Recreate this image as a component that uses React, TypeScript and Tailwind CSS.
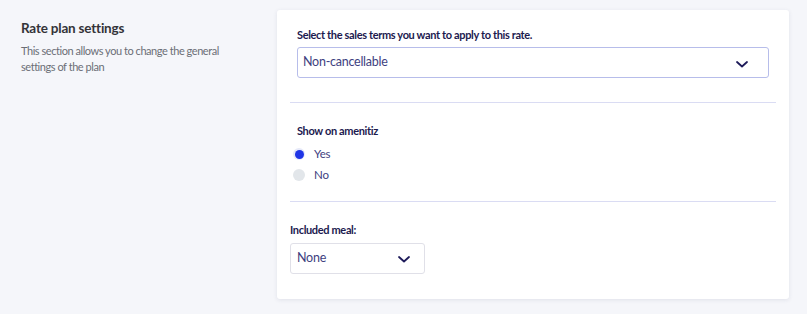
import React from "react";

const Chevron = ({ className }: { className?: string }) => (
  <svg className={className} width="12" height="7" viewBox="0 0 12 7" fill="none">
    <path d="M1 1l5 4.5L11 1" stroke="#1e1b5a" strokeWidth="1.8" strokeLinecap="round" strokeLinejoin="round" />
  </svg>
);

export default function App() {
  return (
    <div
      className="min-h-[314px] w-[807px] bg-[#f5f6fa] flex items-start"
      style={{ fontFamily: "Lato, 'Noto Sans', sans-serif" }}
    >
      <div className="w-[277px] shrink-0 pl-[21px] pt-[18px]">
        <h2 className="text-[13.5px] leading-[20px] font-bold tracking-[-0.2px] text-[#333338]">Rate plan settings</h2>
        <p className="mt-[5px] w-[206px] text-[11px] leading-[16px] tracking-[-0.45px] text-[#6b6e76]">
          This section allows you to change the general settings of the plan
        </p>
      </div>
      <div className="mt-[10px] w-[512px] h-[289px] bg-white rounded-[3px] shadow-[0_1px_4px_rgba(40,50,90,0.10)] flex flex-col">
        <div className="px-[20px] pt-[17px]">
          <label className="block text-[11px] leading-[16px] font-bold tracking-[-0.35px] text-[#1c1a4f]">
            Select the sales terms you want to apply to this rate.
          </label>
          <div className="mt-[4px] h-[31px] w-[472px] border border-[#b7bdea] rounded-[3px] flex items-center justify-between pl-[5px] pr-[20px]">
            <span className="text-[12.5px] tracking-[-0.25px] text-[#3e4180]">Non-cancellable</span>
            <Chevron className="mt-[3px]" />
          </div>
        </div>
        <div className="mx-[13px] mt-[24px] h-px bg-[#dadcf3]" />
        <div className="px-[20px] pt-[20px]">
          <div className="text-[11px] leading-[16px] font-bold tracking-[-0.35px] text-[#1c1a4f]">Show on amenitiz</div>
          <div className="mt-[5px] flex flex-col gap-[1px]">
            <div className="flex items-center h-[20px] -ml-[4px]">
              <span className="w-[12px] h-[12px] rounded-full bg-[#e6e9f9] flex items-center justify-center">
                <span className="w-[9px] h-[9px] rounded-full bg-[#1f35e6]" />
              </span>
              <span className="ml-[9px] text-[11.5px] tracking-[-0.2px] text-[#3e4180]">Yes</span>
            </div>
            <div className="flex items-center h-[20px] -ml-[4px]">
              <span className="w-[12px] h-[12px] rounded-full bg-[#e2e6ea]" />
              <span className="ml-[9px] text-[11.5px] tracking-[-0.2px] text-[#3e4180]">No</span>
            </div>
          </div>
        </div>
        <div className="mx-[13px] mt-[16px] h-px bg-[#dadcf3]" />
        <div className="px-[13px] pt-[20px]">
          <div className="text-[11px] leading-[16px] font-bold tracking-[-0.35px] text-[#1c1a4f]">Included meal:</div>
          <div className="mt-[5px] h-[31px] w-[135px] border border-[#e0e0e8] rounded-[3px] flex items-center justify-between pl-[6px] pr-[14px]">
            <span className="text-[12.5px] tracking-[-0.25px] text-[#3e4180]">None</span>
            <Chevron className="mt-[2px]" />
          </div>
        </div>
      </div>
    </div>
  );
}
